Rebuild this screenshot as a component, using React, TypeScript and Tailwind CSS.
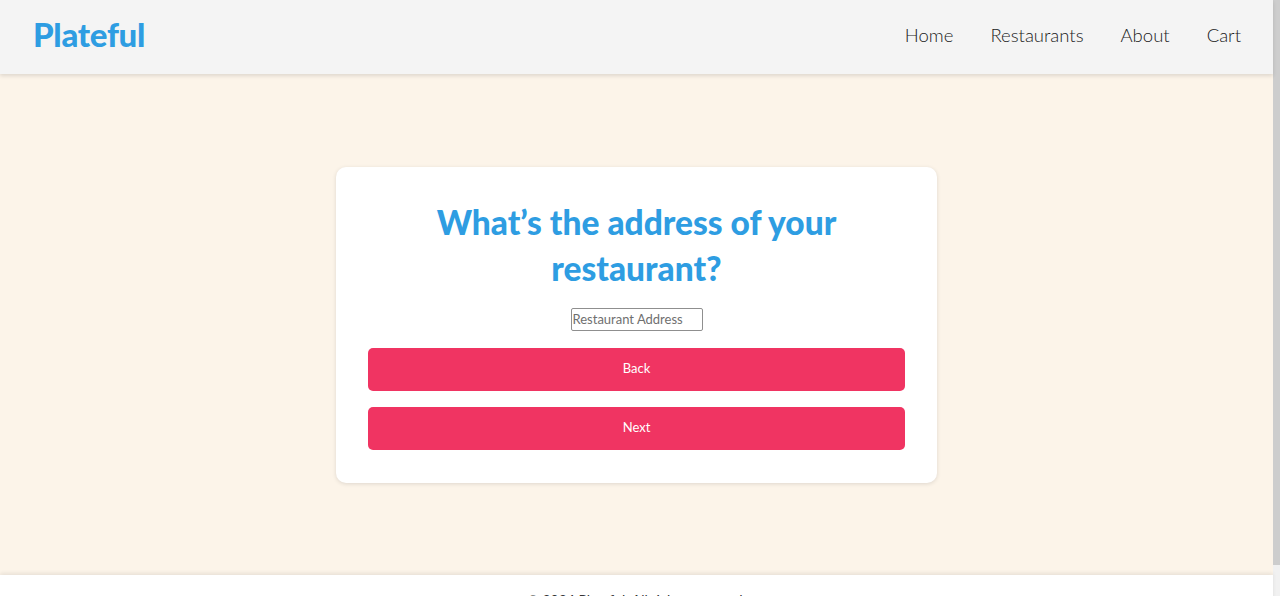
const navLinks = ["Home", "Restaurants", "About", "Cart"]

function Header() {
  return (
    <header className="relative z-10 flex h-[74px] shrink-0 items-center justify-between bg-[#f4f4f4] pb-[4px] pl-[33px] pr-[32px] shadow-[0_2px_4px_rgba(0,0,0,0.12)]">
      <span className="text-[33px] font-black tracking-[-0.3px] text-[#2e9de2]">Plateful</span>
      <nav className="flex items-center gap-[37px] text-[18.5px] font-light text-[#1a1a1a]">
        {navLinks.map((link) => (
          <a key={link} href="#" className="leading-none">
            {link}
          </a>
        ))}
      </nav>
    </header>
  )
}

function AddressCard() {
  return (
    <div className="w-[601px] rounded-[10px] bg-white px-[32px] pt-[32px] pb-[33px] shadow-[0_1px_4px_rgba(0,0,0,0.12)]">
      <h1 className="mx-auto w-[460px] text-center text-[33.5px] leading-[46px] font-black text-[#2e9de2]">
        What’s the address of your restaurant?
      </h1>
      <div className="mt-[17px] flex justify-center">
        <input
          type="text"
          placeholder="Restaurant Address"
          className="h-[23px] w-[132px] rounded-[2px] border border-[#8f8f8f] px-[1px] text-[13px] text-[#222] placeholder:text-[#6f6f6f]"
        />
      </div>
      <div className="mt-[17px] flex flex-col gap-[16px]">
        <button className="h-[43px] rounded-[5px] bg-[#f03462] text-[13px] text-white">Back</button>
        <button className="h-[43px] rounded-[5px] bg-[#f03462] text-[13px] text-white">Next</button>
      </div>
    </div>
  )
}

export default function App() {
  return (
    <div className="flex h-[596px] overflow-hidden bg-white font-['Lato','Noto_Sans',sans-serif]">
      <div className="flex min-w-0 flex-1 flex-col">
        <Header />
        <main className="flex h-[501px] shrink-0 items-center justify-center bg-[#fcf4e9]">
          <AddressCard />
        </main>
        <footer className="relative flex justify-center bg-white pt-[14px] shadow-[0_-2px_4px_rgba(0,0,0,0.08)]">
          <p className="text-[14px] text-[#333]">© 2024 Plateful. All rights reserved.</p>
        </footer>
      </div>
      <div className="flex w-[7px] shrink-0 flex-col bg-[#f1f1f1]">
        <div className="h-[565px] bg-[#cdcdcd]" />
      </div>
    </div>
  )
}
